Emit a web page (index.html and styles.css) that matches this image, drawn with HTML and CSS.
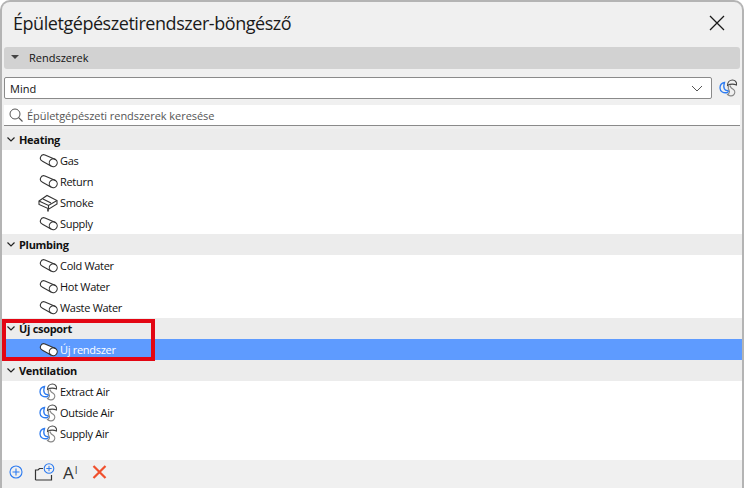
FILE: index.html
```html
<!DOCTYPE html>
<html lang="hu">
<head>
    <meta charset="UTF-8">
    <title>Épületgépészetirendszer-böngésző</title>
    <link rel="stylesheet" href="styles.css">
</head>
<body>
    <svg class="defs" width="0" height="0">
        <symbol id="pipe" viewBox="0 0 20 18">
            <path d="M7 3L17.500 7.500A3.800 3.800 0 0 1 13 14L4.500 9.200A3.300 3.300 0 0 1 7 3Z" fill="var(--pipe-fill, none)" stroke="currentColor" stroke-width="1.100"/>
            <path d="M17.500 7.500A3.800 3.800 0 0 0 13 14" fill="none" stroke="currentColor" stroke-width="1.100"/>
        </symbol>
        <symbol id="duct" viewBox="0 0 20 18">
            <path d="M1 7L9 1.500L19 6.500V10L11 15L1 10.500Z" fill="none" stroke="#333" stroke-width="1.100"/>
            <path d="M1 7L10.500 11.500L19 6.500M10.500 11.500V15M5 5L13 9" fill="none" stroke="#333" stroke-width="1.100"/>
            <path d="M10 15V17.500" stroke="#333" stroke-width="1.600"/>
        </symbol>
        <symbol id="air" viewBox="0 0 20 18">
            <path d="M6.500 3.500C3.500 4 2 6.500 2 9C2 12.500 5.500 14.500 9.500 13.500C10.500 13 10.500 12 10 11.500C7 12 4.500 9.500 6.500 3.500Z" fill="none" stroke="#2d7bf0" stroke-width="1.300"/>
            <path d="M9.500 6.500C9.500 3 12 1 14.500 1C17 1 19 3 18.500 6C16 5 12 5 9.500 6.500Z" fill="none" stroke="#444" stroke-width="1.100"/>
            <path d="M12.500 6.500C11.500 8.500 14 9.500 15.500 10.500C17.500 12 17 14.500 15.500 16C14 17.500 11 17 9.500 15.500C11.500 14.500 12 12.500 11 11C10 9.500 10 8 11 6.800" fill="none" stroke="#888" stroke-width="1.100"/>
        </symbol>
    </svg>

    <div class="window">
        <header class="titlebar">
            <h1>Épületgépészetirendszer-böngésző</h1>
            <svg class="close" width="16" height="16" viewBox="0 0 16 16"><path d="M1 1L15 15M15 1L1 15" stroke="#1a1a1a" stroke-width="1.300"/></svg>
        </header>

        <div class="section-bar"><span class="section-arrow"></span>Rendszerek</div>

        <div class="select-row">
            <div class="select">
                <span>Mind</span>
                <svg width="12" height="7" viewBox="0 0 12 7"><path d="M1 1L6 6L11 1" fill="none" stroke="#555" stroke-width="1"/></svg>
            </div>
            <svg class="select-icon"><use href="#air"/></svg>
        </div>

        <div class="search">
            <svg width="14" height="14" viewBox="0 0 14 14"><circle cx="6" cy="6" r="5" fill="none" stroke="#555"/><path d="M9.500 9.500L13.500 13.500" stroke="#555" stroke-width="1.100"/></svg>
            <span>Épületgépészeti rendszerek keresése</span>
        </div>

        <div class="list">
            <div class="group"><svg class="chev" viewBox="0 0 8 5"><path d="M.5.500L4 4L7.500.500" fill="none" stroke="#222" stroke-width="1.200"/></svg>Heating</div>
            <div class="row"><svg class="ico"><use href="#pipe"/></svg>Gas</div>
            <div class="row"><svg class="ico"><use href="#pipe"/></svg>Return</div>
            <div class="row"><svg class="ico"><use href="#duct"/></svg>Smoke</div>
            <div class="row"><svg class="ico"><use href="#pipe"/></svg>Supply</div>

            <div class="group"><svg class="chev" viewBox="0 0 8 5"><path d="M.5.500L4 4L7.500.500" fill="none" stroke="#222" stroke-width="1.200"/></svg>Plumbing</div>
            <div class="row"><svg class="ico"><use href="#pipe"/></svg>Cold Water</div>
            <div class="row"><svg class="ico"><use href="#pipe"/></svg>Hot Water</div>
            <div class="row"><svg class="ico"><use href="#pipe"/></svg>Waste Water</div>

            <div class="group"><svg class="chev" viewBox="0 0 8 5"><path d="M.5.500L4 4L7.500.500" fill="none" stroke="#222" stroke-width="1.200"/></svg>Új csoport</div>
            <div class="row selected"><svg class="ico"><use href="#pipe"/></svg>Új rendszer</div>

            <div class="group"><svg class="chev" viewBox="0 0 8 5"><path d="M.5.500L4 4L7.500.500" fill="none" stroke="#222" stroke-width="1.200"/></svg>Ventilation</div>
            <div class="row"><svg class="ico"><use href="#air"/></svg>Extract Air</div>
            <div class="row"><svg class="ico"><use href="#air"/></svg>Outside Air</div>
            <div class="row"><svg class="ico"><use href="#air"/></svg>Supply Air</div>
        </div>

        <footer class="toolbar">
            <svg width="14" height="14" viewBox="0 0 14 14"><circle cx="7" cy="7" r="6" fill="none" stroke="#2d7bf0" stroke-width="1.100"/><path d="M7 3.500V10.500M3.500 7H10.500" stroke="#2d7bf0" stroke-width="1.100"/></svg>
            <svg width="21" height="18" viewBox="0 0 21 18"><path d="M1.500 17V7H4L5.500 5.500H9M1.500 17H17.500V12" fill="none" stroke="#333" stroke-width="1.200"/><circle cx="15" cy="5.500" r="4.800" fill="#f0f0f0" stroke="#2d7bf0" stroke-width="1.100"/><path d="M15 2.800V8.200M12.300 5.500H17.700" stroke="#2d7bf0"/></svg>
            <span class="rename">A<sup>I</sup></span>
            <svg width="15" height="14" viewBox="0 0 15 14"><path d="M1.500 1L13.500 13M13.500 1L1.500 13" stroke="#f0502d" stroke-width="2.200"/></svg>
        </footer>

        <div class="highlight"></div>
    </div>
</body>
</html>
```

FILE: styles.css
```css
* {
    box-sizing: border-box;
}
html, body {
    margin: 0;
    height: 100%;
    overflow: hidden;
}
body {
    font-family: "Open Sans", "Noto Sans", sans-serif;
    font-size: 11px;
    color: #111;
    background-color: #fff;
}
.defs {
    position: absolute;
}
.window {
    position: relative;
    display: flex;
    flex-direction: column;
    height: 488px;
    background-color: #f0f0f0;
    border: 2px solid #b4b4b4;
    border-bottom: 0;
    border-radius: 10px 10px 0 0;
}
.titlebar {
    display: flex;
    justify-content: space-between;
    align-items: center;
    height: 45px;
    padding: 0 17px 4px 11px;
}
.titlebar h1 {
    margin: 0;
    font-size: 18px;
    font-weight: 400;
    letter-spacing: -0.45px;
    color: #1a1a1a;
}
.section-bar {
    display: flex;
    align-items: center;
    height: 22px;
    margin: 0 2px;
    padding: 0 0 2px 7px;
    background-color: #d2d2d2;
    border-radius: 3px;
}
.section-arrow {
    width: 0;
    height: 0;
    margin-right: 10px;
    border: 4px solid transparent;
    border-top: 4px solid #444;
    border-bottom: 0;
}
.select-row {
    display: flex;
    align-items: center;
    margin: 8px 0 0 2px;
}
.select {
    display: flex;
    justify-content: space-between;
    align-items: center;
    width: 708px;
    height: 22px;
    padding: 0 8px 0 5px;
    background-color: #fff;
    border: 1px solid #8a8a8a;
    border-radius: 2px;
}
.select-icon {
    width: 20px;
    height: 18px;
    margin-left: 6px;
}
.search {
    display: flex;
    align-items: center;
    gap: 4px;
    height: 21px;
    margin: 6px 2px 3px;
    padding-left: 5px;
    color: #555;
    letter-spacing: -0.05px;
    background-color: #fff;
    border-bottom: 1px solid #8a8a8a;
}
.list {
    flex: 1;
    background-color: #fff;
}
.group {
    display: flex;
    align-items: center;
    height: 21px;
    padding-left: 5px;
    font-weight: 700;
    letter-spacing: -0.3px;
    background-color: #ececec;
}
.chev {
    width: 8px;
    height: 5px;
    margin-right: 4px;
}
.row {
    display: flex;
    align-items: center;
    height: 21px;
    padding-left: 36px;
    letter-spacing: -0.3px;
}
.ico {
    width: 20px;
    height: 18px;
    margin-right: 2px;
    color: #333;
}
.selected {
    color: #fff;
    background-color: #5e9bff;
    --pipe-fill: #fff;
}
.selected .ico {
    color: #333;
}
.toolbar {
    display: flex;
    align-items: center;
    gap: 11px;
    height: 28px;
    padding: 0 0 4px 7px;
}
.rename {
    width: 18px;
    margin-left: -3px;
    font-size: 17px;
    color: #333;
}
.rename sup {
    margin-left: 1px;
    font-size: 10px;
    vertical-align: 5px;
    line-height: 0;
}
/* annotation drawn on top of the screenshot */
.highlight {
    position: absolute;
    left: 0;
    top: 317px;
    width: 153px;
    height: 42px;
    border: 4px solid #e30613;
}
```
